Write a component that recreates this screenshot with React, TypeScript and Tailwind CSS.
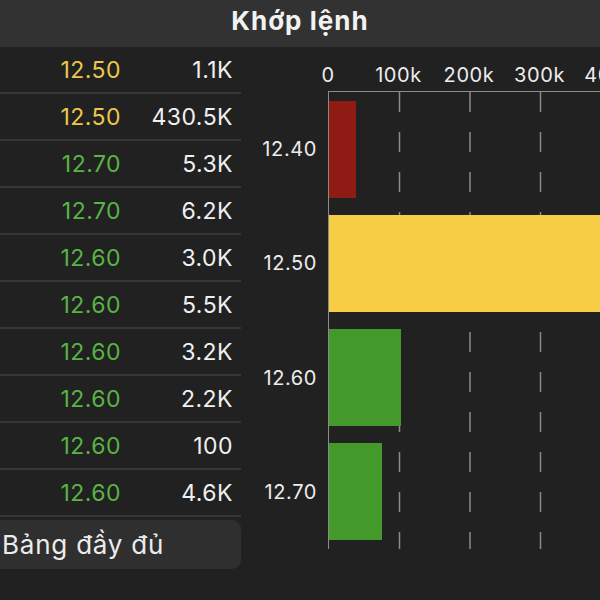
const trades = [
    { price: "12.50", vol: "1.1K", tone: "ref" },
    { price: "12.50", vol: "430.5K", tone: "ref" },
    { price: "12.70", vol: "5.3K", tone: "up" },
    { price: "12.70", vol: "6.2K", tone: "up" },
    { price: "12.60", vol: "3.0K", tone: "up" },
    { price: "12.60", vol: "5.5K", tone: "up" },
    { price: "12.60", vol: "3.2K", tone: "up" },
    { price: "12.60", vol: "2.2K", tone: "up" },
    { price: "12.60", vol: "100", tone: "up" },
    { price: "12.60", vol: "4.6K", tone: "up" },
];

const bars = [
    { label: "12.40", value: 38000, color: "bg-[#8e1b14]" },
    { label: "12.50", value: 440000, color: "bg-[#f8cd46]" },
    { label: "12.60", value: 102000, color: "bg-[#439a2b]" },
    { label: "12.70", value: 75000, color: "bg-[#439a2b]" },
];

const ticks = ["0", "100k", "200k", "300k", "400k"];
const PX_PER_100K = 70.5;

const App = () => {
    return (
        <div className="w-[600px] h-[600px] bg-[#212121] overflow-hidden flex flex-col font-['Inter',sans-serif] text-[#f2f2f2]">
            {/* Header */}
            <div className="h-[47px] shrink-0 bg-[#323232] flex items-center justify-center pb-[6px]">
                <span className="text-[26px] font-bold tracking-[0.04em]">Khớp lệnh</span>
            </div>

            <div className="flex flex-row flex-1">
                {/* Trades list */}
                <div className="w-[241px] shrink-0 flex flex-col">
                    {trades.map((t, i) => (
                        <div key={i} className="h-[47px] flex items-center pt-[1px] border-b-2 border-[#363636] text-[23px] tracking-[0.02em]">
                            <span className={`w-[121px] text-right ${t.tone === "ref" ? "text-[#eec64c]" : "text-[#58b443]"}`}>
                                {t.price}
                            </span>
                            <span className="flex-1 text-right pr-[8px] text-[#f0f0f0]">{t.vol}</span>
                        </div>
                    ))}
                    <div className="mt-[3px] -ml-[10px] h-[49px] rounded-[9px] bg-[#2f2f2f] flex items-center pl-[12px]">
                        <span className="text-[26px] tracking-[0.03em] text-[#ececec]">Bảng đầy đủ</span>
                    </div>
                </div>

                {/* Chart */}
                <div className="flex-1 flex flex-col overflow-hidden">
                    <div className="h-[44px] flex items-end pb-[1px] pl-[51.75px]">
                        {ticks.map((t) => (
                            <span key={t} className="w-[70.5px] shrink-0 text-center text-[20px] tracking-[0.03em] text-[#ededed]">{t}</span>
                        ))}
                    </div>
                    <div className="flex flex-row">
                        <div className="w-[87px] shrink-0 flex flex-col">
                            {bars.map((b) => (
                                <div key={b.label} className="h-[114.25px] flex items-center justify-end pr-[11px] pt-[2px] text-[20px] tracking-[0.03em] text-[#ededed]">
                                    {b.label}
                                </div>
                            ))}
                        </div>
                        <div className="relative flex-1 border-t-[1.5px] border-l-[1.5px] border-[#8a8a8a]">
                            <svg className="absolute inset-0 w-full h-full" aria-hidden>
                                {[1, 2, 3, 4].map((k) => (
                                    <line
                                        key={k}
                                        x1={k * PX_PER_100K}
                                        x2={k * PX_PER_100K}
                                        y1={0}
                                        y2={457}
                                        stroke="#8a8a8a"
                                        strokeWidth={1.5}
                                        strokeDasharray="20 20"
                                    />
                                ))}
                            </svg>
                            <div className="relative flex flex-col">
                                {bars.map((b) => (
                                    <div key={b.label} className="h-[114.25px] flex items-center">
                                        <div
                                            className={`h-[97px] ${b.color}`}
                                            style={{ width: (b.value / 100000) * PX_PER_100K }}
                                        />
                                    </div>
                                ))}
                            </div>
                        </div>
                    </div>
                </div>
            </div>
        </div>
    );
};

export default App;
